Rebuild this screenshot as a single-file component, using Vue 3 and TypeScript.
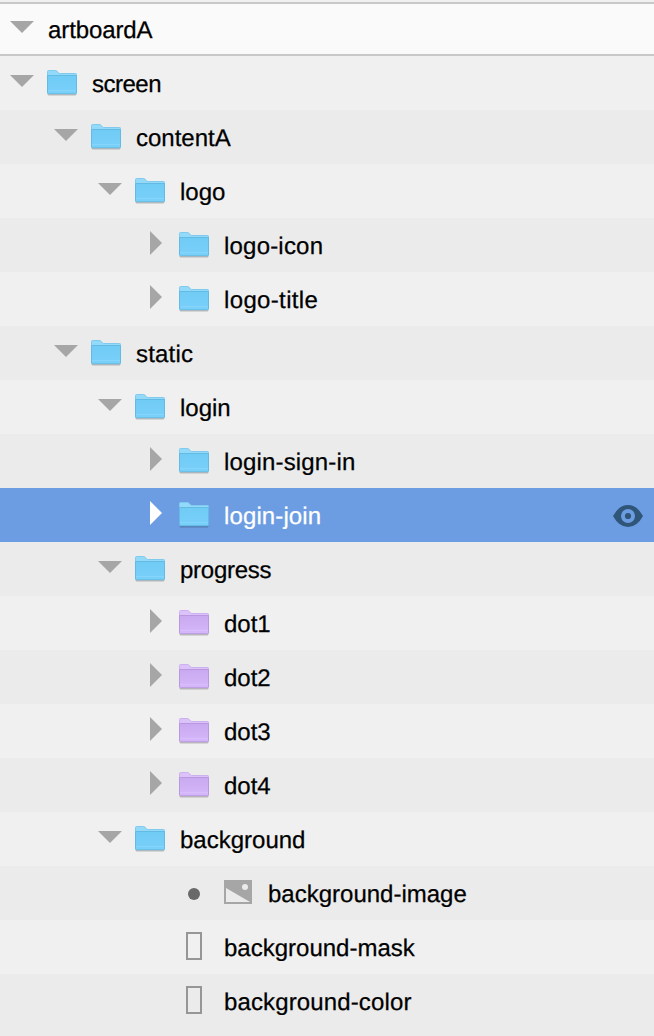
<script setup lang="ts">
interface Layer {
  name: string
  depth: number
  marker: 'open' | 'closed' | 'dot' | 'none'
  icon: 'blue' | 'purple' | 'image' | 'shape'
  tracking?: number
  selected?: boolean
}

const layers: Layer[] = [
  { name: 'screen', depth: 0, marker: 'open', icon: 'blue', tracking: -0.5 },
  { name: 'contentA', depth: 1, marker: 'open', icon: 'blue' },
  { name: 'logo', depth: 2, marker: 'open', icon: 'blue' },
  { name: 'logo-icon', depth: 3, marker: 'closed', icon: 'blue', tracking: 0.2 },
  { name: 'logo-title', depth: 3, marker: 'closed', icon: 'blue', tracking: 0.35 },
  { name: 'static', depth: 1, marker: 'open', icon: 'blue', tracking: 0.2 },
  { name: 'login', depth: 2, marker: 'open', icon: 'blue' },
  { name: 'login-sign-in', depth: 3, marker: 'closed', icon: 'blue', tracking: 0.16 },
  { name: 'login-join', depth: 3, marker: 'closed', icon: 'blue', tracking: 0.12, selected: true },
  { name: 'progress', depth: 2, marker: 'open', icon: 'blue', tracking: -0.27 },
  { name: 'dot1', depth: 3, marker: 'closed', icon: 'purple' },
  { name: 'dot2', depth: 3, marker: 'closed', icon: 'purple' },
  { name: 'dot3', depth: 3, marker: 'closed', icon: 'purple' },
  { name: 'dot4', depth: 3, marker: 'closed', icon: 'purple' },
  { name: 'background', depth: 2, marker: 'open', icon: 'blue' },
  { name: 'background-image', depth: 4, marker: 'dot', icon: 'image' },
  { name: 'background-mask', depth: 3, marker: 'none', icon: 'shape' },
  { name: 'background-color', depth: 3, marker: 'none', icon: 'shape', tracking: 0.13 },
]
</script>

<template>
  <div class="panel">
    <svg class="defs" width="0" height="0" aria-hidden="true">
      <defs>
        <linearGradient id="fill-blue" x1="0" y1="0" x2="0" y2="1">
          <stop offset="0" stop-color="#70cbf5" />
          <stop offset="1" stop-color="#79d0fa" />
        </linearGradient>
        <linearGradient id="fill-purple" x1="0" y1="0" x2="0" y2="1">
          <stop offset="0" stop-color="#c9a9f0" />
          <stop offset="1" stop-color="#d5b7fa" />
        </linearGradient>
      </defs>
    </svg>
    <header class="row artboard">
      <span class="marker">
        <svg class="open" width="24" height="12" viewBox="0 0 24 12"><path d="M0 0H24L12 12Z" /></svg>
      </span>
      <span class="name">artboardA</span>
    </header>
    <ul class="list">
      <li
        v-for="layer in layers"
        :key="layer.name"
        class="row"
        :class="['depth-' + layer.depth, { selected: layer.selected }]"
      >
        <span class="marker">
          <svg v-if="layer.marker === 'open'" class="open" width="24" height="12" viewBox="0 0 24 12"><path d="M0 0H24L12 12Z" /></svg>
          <svg v-else-if="layer.marker === 'closed'" class="closed" width="12" height="24" viewBox="0 0 12 24"><path d="M0 0V24L12 12Z" /></svg>
          <i v-else-if="layer.marker === 'dot'" class="dot"></i>
        </span>
        <span class="icon">
          <svg v-if="layer.icon === 'image'" class="image" width="28" height="24" viewBox="0 0 28 24">
            <path fill="#a6a6a6" fill-rule="evenodd" d="M0 0H28V24H0ZM2 8V22H26Z" />
            <circle cx="21" cy="7" r="3" fill="#ebebeb" />
          </svg>
          <i v-else-if="layer.icon === 'shape'" class="shape"></i>
          <svg v-else class="folder" :class="layer.icon" width="32" height="28" viewBox="0 0 32 28">
            <path class="shade" d="M1.5 24H30.5V24.6Q30.5 25.4 29.5 25.4H2.5Q1.5 25.4 1.5 24.6Z" />
            <path class="tab" d="M1.5 1.5Q1.5 .5 2.5 .5H9.6Q10.4 .5 11 1.2L12.4 2.8Q13 3.5 13.8 3.5H29.6Q30.5 3.5 30.5 4.4V8H1.5Z" />
            <path class="body" d="M1.5 5.5H30.5V23Q30.5 23.7 29.5 23.7H2.5Q1.5 23.7 1.5 23Z" />
            <path class="crease" d="M2 20.5H30" />
          </svg>
        </span>
        <span class="name" :style="{ letterSpacing: (layer.tracking ?? 0) + 'px' }">{{ layer.name }}</span>
        <svg v-if="layer.selected" class="eye" width="30" height="22" viewBox="0 0 30 22">
          <path fill="#2f5578" fill-rule="evenodd" d="M0 11Q6 0 15 0T30 11Q24 22 15 22T0 11ZM15 4A7 7 0 1 0 15 18A7 7 0 1 0 15 4Z" />
          <circle cx="15" cy="11" r="3.1" fill="#2f5578" />
        </svg>
      </li>
    </ul>
  </div>
</template>

<style scoped>
.panel {
  box-sizing: border-box;
  width: 654px;
  height: 1036px;
  border-top: 2px solid #f0f0f0;
  overflow: hidden;
  background: #ebebeb;
  color: #000;
  font: 24px/28px "Liberation Sans", Arial, sans-serif;
  text-rendering: geometricPrecision;
}
.defs { display: block; }
.list { margin: 0; padding: 0; list-style: none; }
.row {
  box-sizing: border-box;
  display: flex;
  align-items: flex-start;
  height: 54px;
  padding-left: 10px;
  background: #f0f0f0;
}
.list .row:nth-child(even) { background: #ebebeb; }
.artboard {
  background: #fafafa;
  border-top: 2px solid #c8c8c8;
  border-bottom: 2px solid #c8c8c8;
}
.depth-1 { padding-left: 54px; }
.depth-2 { padding-left: 98px; }
.depth-3 { padding-left: 142px; }
.depth-4 { padding-left: 186px; }
.marker { flex: none; width: 24px; margin-right: 12px; fill: #a6a6a6; }
.marker svg { display: block; }
.open { margin-top: 19px; }
.closed { margin: 13px 0 0 8px; }
.dot {
  display: block;
  width: 12px;
  height: 12px;
  margin: 22px 0 0 2px;
  border-radius: 50%;
  background: #696969;
}
.icon { flex: none; width: 32px; margin-right: 14px; }
.icon svg, .icon i { display: block; }
.folder { margin-top: 14px; }
.folder path { stroke-width: 1; }
.shade { fill: #000; opacity: .22; }
.blue .tab { fill: #93d9fa; stroke: #80caee; }
.blue .body { fill: url(#fill-blue); stroke: #63bae2; }
.blue .crease { stroke: #86d6fb; }
.purple .tab { fill: #dcc2fb; stroke: #cdb0ee; }
.purple .body { fill: url(#fill-purple); stroke: #b998df; }
.purple .crease { stroke: #dabefb; }
.image { margin: 14px 0 0 2px; }
.shape {
  box-sizing: border-box;
  width: 16px;
  height: 28px;
  margin: 12px 0 0 8px;
  border: 2px solid #969696;
}
.name { flex: 1; margin-top: 15px; white-space: nowrap; -webkit-text-stroke: 0.25px currentColor; }
.artboard .marker { margin-right: 14px; }
.artboard .open { margin-top: 17px; }
.artboard .name { margin-top: 13px; letter-spacing: -0.1px; }
.list .row.selected { background: #6c9ce1; color: #fff; }
.selected .marker { fill: #fff; }
.eye { flex: none; margin: 17px 11px 0 0; }
</style>

<style>
body { overflow: hidden; }
</style>
